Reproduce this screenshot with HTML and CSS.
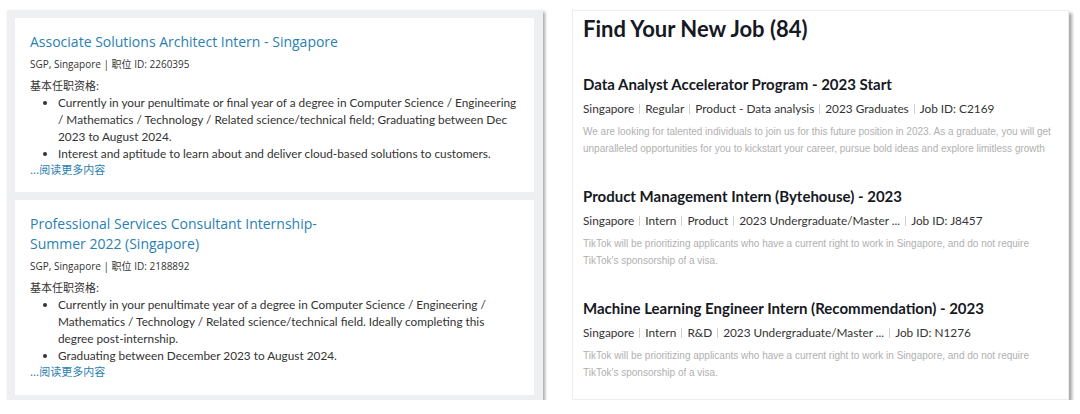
FILE: index.html
```html
<!DOCTYPE html>
<html>
<head>
<meta charset="utf-8">
<link rel="stylesheet" href="styles.css">
</head>
<body>
<div class="page">
  <div class="left">
    <div class="card c1">
      <div class="atitle">Associate Solutions Architect Intern - Singapore</div>
      <div class="ameta">SGP, Singapore | 职位 ID: 2260395</div>
      <div class="qual">基本任职资格:</div>
      <ul class="bul">
        <li>Currently in your penultimate or final year of a degree in Computer Science / Engineering / Mathematics / Technology / Related science/technical field; Graduating between Dec 2023 to August 2024.</li>
        <li>Interest and aptitude to learn about and deliver cloud-based solutions to customers.</li>
      </ul>
      <div class="more">...阅读更多内容</div>
    </div>
    <div class="card c2">
      <div class="atitle">Professional Services Consultant Internship-<br>Summer 2022 (Singapore)</div>
      <div class="ameta">SGP, Singapore | 职位 ID: 2188892</div>
      <div class="qual">基本任职资格:</div>
      <ul class="bul">
        <li>Currently in your penultimate year of a degree in Computer Science / Engineering / Mathematics / Technology / Related science/technical field. Ideally completing this degree post-internship.</li>
        <li>Graduating between December 2023 to August 2024.</li>
      </ul>
      <div class="more">...阅读更多内容</div>
    </div>
  </div>
  <div class="right">
    <h1 class="rhead">Find Your New Job (84)</h1>
    <div class="job">
      <div class="jtitle">Data Analyst Accelerator Program - 2023 Start</div>
      <div class="jmeta"><span>Singapore</span><span>Regular</span><span>Product - Data analysis</span><span>2023 Graduates</span><span>Job ID: C2169</span></div>
      <div class="jdesc">We are looking for talented individuals to join us for this future position in 2023. As a graduate, you will get unparalleled opportunities for you to kickstart your career, pursue bold ideas and explore limitless growth</div>
    </div>
    <div class="job">
      <div class="jtitle">Product Management Intern (Bytehouse) - 2023</div>
      <div class="jmeta"><span>Singapore</span><span>Intern</span><span>Product</span><span>2023 Undergraduate/Master ...</span><span>Job ID: J8457</span></div>
      <div class="jdesc">TikTok will be prioritizing applicants who have a current right to work in Singapore, and do not require TikTok's sponsorship of a visa.</div>
    </div>
    <div class="job">
      <div class="jtitle">Machine Learning Engineer Intern (Recommendation) - 2023</div>
      <div class="jmeta"><span>Singapore</span><span>Intern</span><span>R&amp;D</span><span>2023 Undergraduate/Master ...</span><span>Job ID: N1276</span></div>
      <div class="jdesc">TikTok will be prioritizing applicants who have a current right to work in Singapore, and do not require TikTok's sponsorship of a visa.</div>
    </div>
  </div>
</div>
</body>
</html>
```
FILE: styles.css
```css
html, body { margin: 0; padding: 0; background: #fff; }
.page {
  display: flex;
  align-items: flex-start;
  gap: 29px;
  padding: 10px 0 0 7px;
}
.left {
  width: 536px;
  height: 390px;
  box-sizing: border-box;
  background: #eeeff1;
  padding: 8px 9px 5px 8px;
  display: flex;
  flex-direction: column;
  gap: 8px;
  box-shadow: 2px 2px 3px rgba(0,0,0,0.35);
  font-family: "Lato", "Noto Sans CJK SC", sans-serif;
  color: #2b2b2b;
}
.card {
  background: #fff;
  padding: 14px 15px 0 15px;
  box-sizing: border-box;
}
.c1 { height: 174px; }
.c2 { height: 195px; }
.atitle {
  color: #2a7fb2;
  font-family: "Open Sans", sans-serif;
  font-size: 14px;
  line-height: 20px;
}
.ameta {
  font-family: "Open Sans", "Noto Sans CJK SC", sans-serif;
  font-size: 10px;
  line-height: 14px;
  margin-top: 5px;
  color: #333;
}
.qual {
  font-family: "Noto Sans CJK SC", sans-serif;
  font-size: 11px;
  line-height: 16px;
  margin-top: 6px;
  color: #333;
}
.bul {
  margin: 1px 0 0 0;
  padding-left: 28px;
  font-size: 11.8px;
  line-height: 17px;
  color: #333;
}
.more {
  color: #2a7fb2;
  font-family: "Noto Sans CJK SC", sans-serif;
  font-size: 11px;
  line-height: 15px;
}
.right {
  width: 497px;
  height: 390px;
  box-sizing: border-box;
  background: #fff;
  border: 1px solid #eee;
  box-shadow: 3px 3px 3px rgba(0,0,0,0.35);
  padding: 3px 10px 0 10px;
  font-family: "Lato", sans-serif;
  color: #161823;
}
.rhead {
  margin: 0;
  font-size: 22px;
  line-height: 30px;
  font-weight: 700;
}
.job { margin-top: 30px; }
.job + .job { margin-top: 29px; }
.jtitle {
  font-size: 15px;
  font-weight: 700;
  line-height: 20px;
}
.jmeta {
  margin-top: 6px;
  font-size: 11.8px;
  line-height: 18px;
  color: #333;
  display: flex;
}
.jmeta span + span::before {
  content: "";
  display: inline-block;
  width: 1px;
  height: 10px;
  background: #d0d0d0;
  margin: 0 5px;
  vertical-align: -1px;
}
.jdesc {
  margin-top: 5px;
  font-size: 10px;
  line-height: 17px;
  color: #b0b0b0;
  font-family: "Liberation Sans", sans-serif;
}
```
